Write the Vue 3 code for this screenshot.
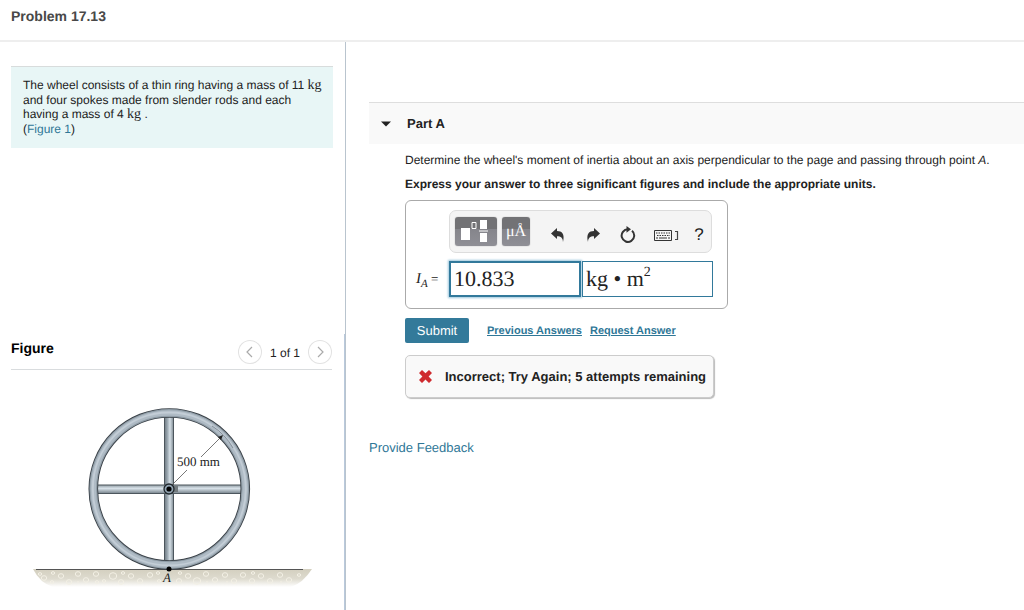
<script setup>
import { ref } from 'vue'

const answer = ref('10.833')

const pebbles = [
  [20, 5, 2], [24, 9, 3], [32, 13, 2], [33, 4, 2], [41, 7, 3], [49, 13, 3], [58, 5, 3], [58, 13, 1], [66, 11, 3], [76, 5, 3],
  [77, 13, 2], [84, 12, 2], [93, 7, 4], [101, 13, 3], [103, 4, 2], [111, 7, 3], [120, 12, 3], [130, 6, 3], [139, 12, 2], [138, 4, 2],
  [159, 12, 3], [160, 4, 2], [168, 7, 3], [177, 12, 4], [186, 5, 3], [187, 13, 1], [195, 11, 3], [205, 6, 3], [207, 13, 1], [214, 12, 3],
  [223, 6, 3], [232, 12, 3], [233, 4, 2], [241, 7, 3], [250, 12, 3], [260, 6, 3], [261, 13, 1], [269, 11, 3], [279, 6, 2]
]
</script>

<template>
  <div class="page">
    <header class="top">
      <h1>Problem 17.13</h1>
    </header>
    <div class="columns">
      <aside class="side">
        <section class="intro">
          <p class="statement">
            The wheel consists of a thin ring having a mass of 11 <span class="unit">kg</span> and four spokes made
            from slender rods and each having a mass of 4 <span class="unit">kg</span> .<br />(<a href="#figure">Figure 1</a>)
          </p>
        </section>
        <section id="figure" class="figure">
          <div class="figure-head">
            <h2>Figure</h2>
            <div class="pager">
              <button type="button" aria-label="Previous figure">
                <svg width="24" height="24" viewBox="0 0 24 24"><path d="M14 7l-5 5 5 5" /></svg>
              </button>
              <span>1 of 1</span>
              <button type="button" aria-label="Next figure">
                <svg width="24" height="24" viewBox="0 0 24 24"><path d="M10 7l5 5-5 5" /></svg>
              </button>
            </div>
          </div>
          <svg class="drawing" viewBox="0 0 321 200" role="img" aria-label="Wheel with four spokes resting on the ground at A">
            <defs>
              <linearGradient id="spoke-v">
                <stop offset="0" stop-color="#707b83" />
                <stop offset=".3" stop-color="#97a4ad" />
                <stop offset=".6" stop-color="#d5dfe6" />
                <stop offset="1" stop-color="#7e8a92" />
              </linearGradient>
              <linearGradient id="spoke-h" x2="0" y2="1">
                <stop offset="0" stop-color="#8f9ba3" />
                <stop offset=".4" stop-color="#d8e2e9" />
                <stop offset="1" stop-color="#75818a" />
              </linearGradient>
              <linearGradient id="soil" x2="0" y2="1">
                <stop offset="0" stop-color="#d3cfbf" />
                <stop offset=".55" stop-color="#dedbcf" />
                <stop offset="1" stop-color="#ffffff" />
              </linearGradient>
            </defs>
            <g transform="translate(0 169)">
              <path d="M22 0H301Q292 14 280 18H42Q29 14 22 0Z" fill="url(#soil)" />
              <g fill="none" stroke="#f3f0e5" stroke-width="1">
                <ellipse v-for="(p, i) in pebbles" :key="i" :cx="p[0] + 9" :cy="p[1]" :rx="p[2] - 0.3" :ry="p[2] - 0.7" />
              </g>
              <path d="M25 .5H292" stroke="#555" stroke-width="1.2" />
            </g>
            <rect x="153.500" y="16" width="9" height="146" fill="url(#spoke-v)" stroke="#4c565d" />
            <rect x="86" y="85" width="145" height="8.500" fill="url(#spoke-h)" stroke="#4c565d" />
            <g fill="none">
              <circle cx="158.300" cy="89" r="76" stroke="#394047" stroke-width="9.600" />
              <circle cx="158.300" cy="89" r="76" stroke="#8f9ca6" stroke-width="7.800" />
              <circle cx="158.300" cy="89" r="76" stroke="#afbbc5" stroke-width="5.500" />
              <circle cx="158.300" cy="89" r="76.500" stroke="#c3cdd6" stroke-width="2" />
              <path d="M201 26q13 8 21 22" stroke="#68737c" stroke-width=".7" />
              <path d="M161 85L176 70M190 57L209 38" stroke="#555" stroke-width=".8" />
            </g>
            <path d="M212 35l-5 2 3 3z" fill="#222" />
            <rect x="162" y="86" width="5" height="6" fill="#727a7e" />
            <circle cx="158" cy="89" r="5" fill="#93a5b3" stroke="#20272c" stroke-width="1.300" />
            <circle cx="158" cy="89" r="2.600" fill="#000" />
            <circle cx="158" cy="169" r="2.500" fill="#000" />
            <text x="166" y="66">500 mm</text>
            <text x="152" y="182" class="point">A</text>
          </svg>
        </section>
      </aside>

      <main class="work">
        <div class="part-head">
          <button type="button" aria-label="Collapse Part A" class="collapse">
            <svg width="10" height="6" viewBox="0 0 10 6"><path d="M0 .5h10L5 5.500z" fill="#222" /></svg>
          </button>
          <h2>Part A</h2>
        </div>
        <div class="part-body">
          <p>Determine the wheel's moment of inertia about an axis perpendicular to the page and passing through point <i>A</i>.</p>
          <p class="instruction">Express your answer to three significant figures and include the appropriate units.</p>

          <div class="answer-box">
            <div class="toolbar">
              <button type="button" class="dark templates" aria-label="Templates">
                <svg width="42" height="29" viewBox="0 0 42 29">
                  <path d="M6 11h9v12H6zM25 3h7v9h-7zM25 16h7v9h-7zM24 13.500h9v1h-9z" fill="#fff" />
                  <path d="M17 5.500h4v6h-4z" fill="none" stroke="#fff" />
                </svg>
              </button>
              <button type="button" class="dark symbols" aria-label="Symbols">μÅ</button>
              <button type="button" class="tool" aria-label="Undo">
                <svg width="14" height="14" viewBox="0 0 14 14"><path d="M0 5.500L6 0v3c5 0 8 3 6 11-.2-4-2-5.700-6-5.700V11z" fill="#333" /></svg>
              </button>
              <button type="button" class="tool" aria-label="Redo">
                <svg width="14" height="14" viewBox="0 0 14 14"><path d="M14 5.500L8 0v3C3 3 0 6 2 14c.2-4 2-5.700 6-5.700V11z" fill="#333" /></svg>
              </button>
              <button type="button" class="tool" aria-label="Reset">
                <svg width="16" height="18" viewBox="0 0 16 18">
                  <path d="M12 4.800A6.300 6.300 0 1 1 8 3.300" fill="none" stroke="#333" stroke-width="2" />
                  <path d="M6.500 0l4.500 3.300-4.500 3.500z" fill="#333" />
                </svg>
              </button>
              <button type="button" class="tool keys" aria-label="Keyboard shortcuts">
                <svg width="25" height="12" viewBox="0 0 25 12" fill="none" stroke="#333">
                  <path d="M.5.5h17v10H.5z" />
                  <path d="M2 3h14M3 5.500h13" stroke-dasharray="1.500 1" />
                  <path d="M2 8h2M5 8h8M14 8h2" />
                  <path d="M21 1.500h2.500v8H21" stroke="#444" stroke-width="1.200" />
                </svg>
              </button>
              <button type="button" class="tool help" aria-label="Help">?</button>
            </div>
            <label for="value" class="symbol"><i>I<sub>A</sub></i> =</label>
            <div class="fields">
              <input id="value" v-model="answer" type="text" />
              <div class="units" contenteditable="true" role="textbox" aria-label="Units">kg • m<sup>2</sup></div>
            </div>
          </div>

          <div class="actions">
            <button type="button" class="submit">Submit</button>
            <a href="#previous">Previous Answers</a>
            <a href="#request">Request Answer</a>
          </div>

          <div class="feedback" role="status">
            <svg width="13" height="13" viewBox="0 0 13 13"><path d="M3 0l3.500 3.300L10 0l3 3-3.400 3.500L13 10l-3 3-3.500-3.400L3 13l-3-3 3.400-3.500L0 3z" fill="#cf2a2e" /></svg>
            <span>Incorrect; Try Again; 5 attempts remaining</span>
          </div>
        </div>
        <a href="#feedback" class="provide">Provide Feedback</a>
      </main>
    </div>
  </div>
</template>

<style>
body {
  background: #fff;
}
</style>

<style scoped>
.page {
  display: flex;
  flex-direction: column;
  min-height: 100vh;
  font: 12px/14px "Liberation Sans", Arial, sans-serif;
  text-rendering: geometricPrecision;
  color: #222;
}
.page * {
  box-sizing: border-box;
}
h1,
h2,
p {
  margin: 0;
}
a {
  color: #2f7797;
  text-decoration: none;
}
button {
  padding: 0;
  border: 0;
  background: none;
  font-family: inherit;
  text-rendering: inherit;
  color: inherit;
}
svg {
  display: block;
}
.top {
  padding: 8px 11px 16px;
  border-bottom: 2px solid #eee;
}
h1 {
  font-size: 14px;
  line-height: 16px;
  color: #484848;
}
.columns {
  flex: 1;
  display: grid;
  grid-template-columns: 346px minmax(0, 1fr);
}
.side {
  display: flex;
  flex-direction: column;
  border-right: 1px solid #b9c4ce;
}
.intro {
  min-height: 292px;
  padding: 24px 12px 0 11px;
}
.statement {
  padding: 11px 8px 12px 12px;
  border-top: 1px solid #d8dcdc;
  background: #e8f6f6;
  font-size: 12px;
  line-height: 14px;
}
.unit {
  font: 14px/14px "Liberation Serif", serif;
}
.figure {
  flex: 1;
  padding: 6px 12px 0 11px;
  border-right: 1px solid #b9c9dc;
}
.figure-head {
  display: flex;
  justify-content: space-between;
  padding-bottom: 5px;
  border-bottom: 1px solid #d9dcde;
}
.figure-head h2 {
  font-size: 14px;
  line-height: 16px;
  color: #000;
}
.pager {
  display: flex;
  align-items: center;
  gap: 8px;
}
.pager span {
  padding-top: 2px;
}
.pager button {
  width: 24px;
  height: 24px;
  border-radius: 50%;
  box-shadow: inset 0 0 0 1px #e2e2e2;
}
.pager path {
  fill: none;
  stroke: #aaa;
  stroke-width: 1.2;
}
.drawing {
  width: 100%;
  margin-top: 30px;
}
.drawing text {
  font: 13px "Liberation Serif", serif;
  fill: #222;
}
.drawing .point {
  font-style: italic;
}
.work {
  padding: 60px 0 0 23px;
}
.part-head {
  display: flex;
  align-items: center;
  gap: 16px;
  height: 42px;
  padding-left: 12px;
  border-top: 1px solid #dedede;
  background: #f9f9f9;
}
.part-head h2 {
  font-size: 13px;
}
.part-body {
  padding: 9px 12px 0 36px;
}
.instruction {
  margin: 10px 0 9px;
  font-weight: bold;
}
.answer-box {
  display: grid;
  grid-template-columns: 33px auto;
  justify-content: start;
  row-gap: 8px;
  width: fit-content;
  padding: 9px 14px 11px 10px;
  border: 1px solid #aaa;
  border-radius: 6px;
}
.toolbar {
  grid-column: 2;
  justify-self: start;
  display: flex;
  align-items: center;
  height: 43px;
  padding: 0 0 0 5px;
  border: 1px solid #ddd;
  border-radius: 7px;
  background: #f4f4f4;
}
.dark {
  height: 29px;
  border-radius: 3px;
  background: linear-gradient(#727275 0 42%, #85858b 42%, #8f8f96);
  box-shadow: 0 0 1px #777;
  color: #fff;
}
.templates {
  width: 42px;
}
.symbols {
  width: 28px;
  margin: 0 10px 0 5px;
  font: 16px/28px "Liberation Serif", serif;
}
.tool {
  display: grid;
  place-items: center;
  width: 35px;
  height: 30px;
  padding-top: 6px;
}
.keys {
  width: 42px;
  padding-top: 9px;
}
.help {
  width: 24px;
  font-size: 17px;
}
.symbol {
  align-self: center;
  font: 13px/16px "Liberation Serif", serif;
  white-space: nowrap;
}
.symbol i {
  font-size: 15px;
}
.symbol sub {
  font-size: 11px;
  line-height: 1px;
}
.fields {
  display: grid;
  grid-template-columns: 132px 132px;
}
.fields input,
.units {
  height: 36px;
  padding: 0 3px;
  border: 1px solid #32799b;
  border-radius: 0;
  background: #fff;
  outline: 0;
  font: 22px/34px "Liberation Serif", serif;
  text-rendering: inherit;
  color: #222;
}
.fields input {
  width: 100%;
  border-width: 2px;
  box-shadow: 0 0 2px 1px #9cc6dc;
}
.units {
  margin-left: 1px;
  white-space: nowrap;
}
.units sup {
  font-size: 14px;
  line-height: 1px;
  vertical-align: 10px;
}
.actions {
  display: flex;
  align-items: center;
  margin: 9px 0 12px;
}
.actions a {
  margin-right: 8px;
  font-size: 11px;
  font-weight: bold;
  text-decoration: underline;
}
.submit {
  width: 64px;
  height: 25px;
  margin-right: 18px;
  border-radius: 2px;
  background: #337a9a;
  font-size: 13px;
  color: #fff;
}
.feedback {
  display: flex;
  align-items: center;
  gap: 13px;
  width: fit-content;
  height: 43px;
  padding: 0 7px 0 13px;
  border: 1px solid #ccc;
  border-radius: 5px;
  background: #f9f9f9;
  box-shadow: 1px 1px 1px #bbb;
  font-size: 13px;
  font-weight: bold;
}
.provide {
  display: inline-block;
  margin-top: 43px;
  font-size: 13px;
}
</style>
